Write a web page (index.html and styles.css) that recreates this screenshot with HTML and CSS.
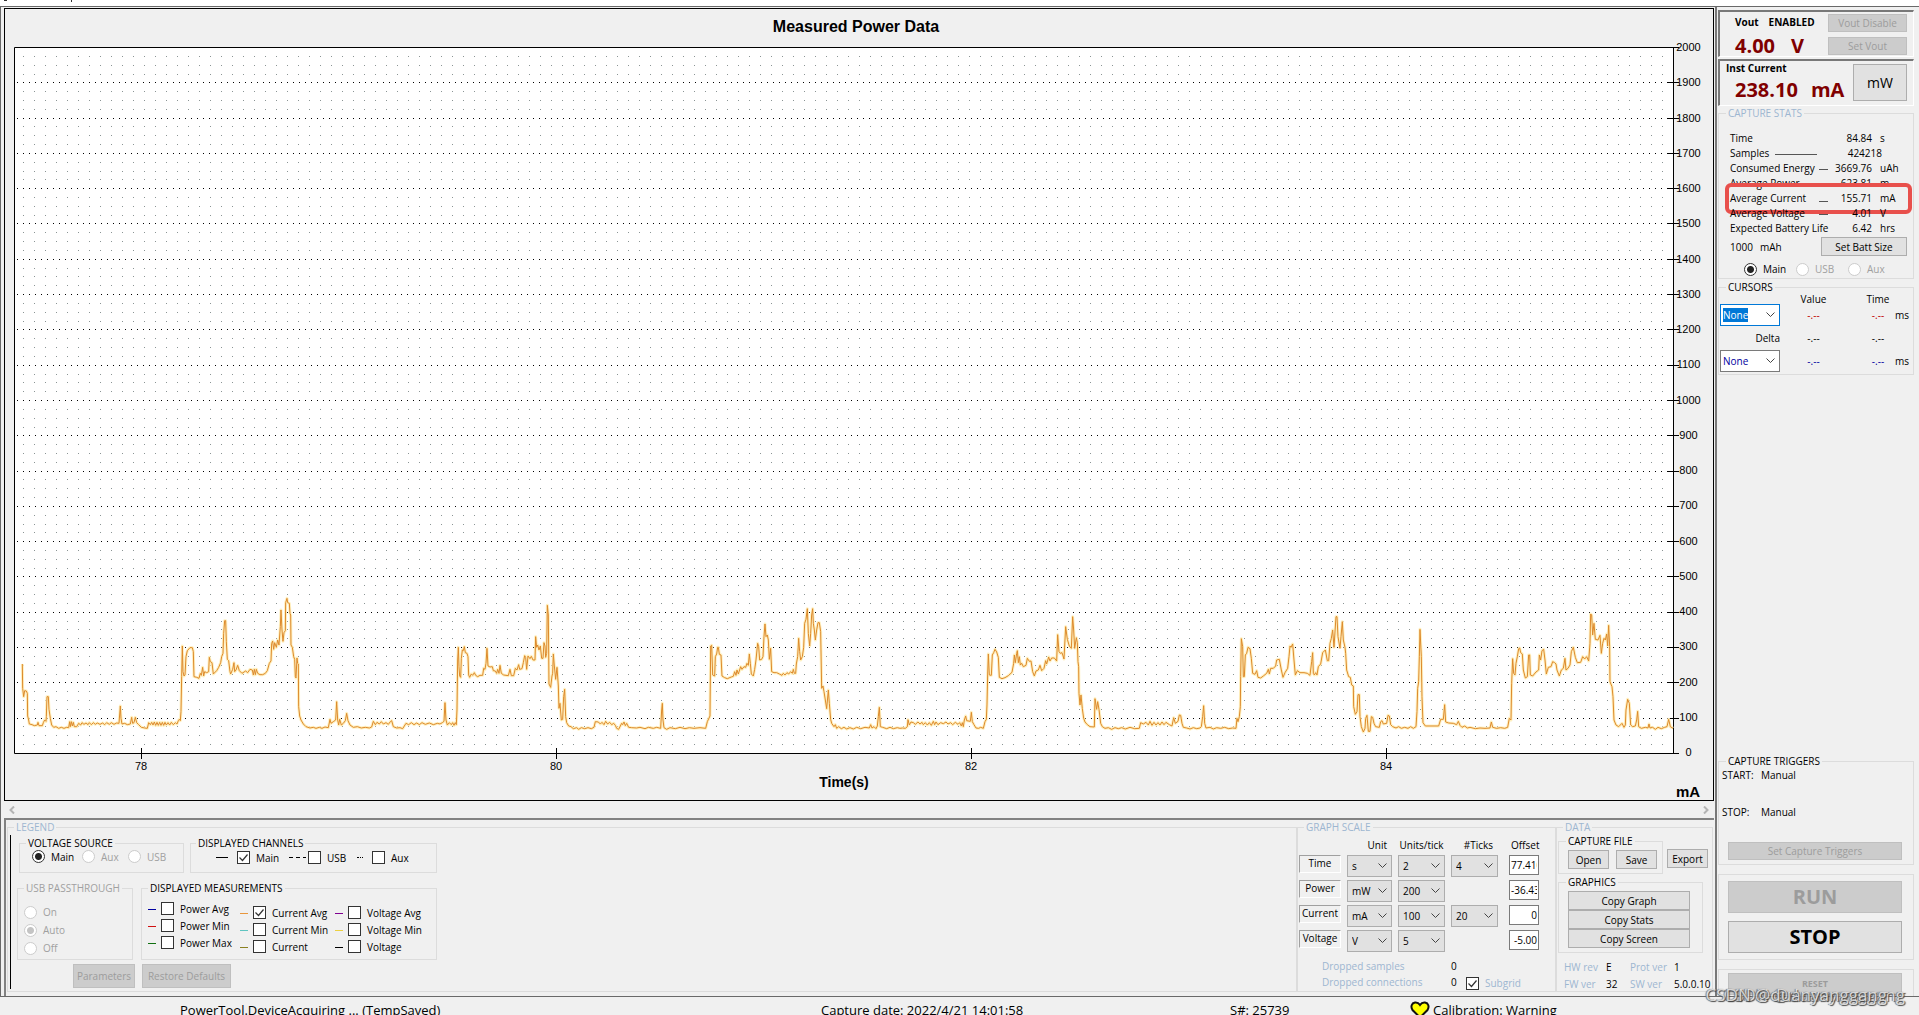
FILE: index.html
```html
<!DOCTYPE html>
<html lang="en">
<head>
<meta charset="utf-8">
<title>PowerTool</title>
<link rel="stylesheet" href="styles.css">
</head>
<body>
<header class="menu-strip"><i></i><i></i></header>

<main class="window">
  <div class="work">
    <figure class="chart">
      <figcaption>Measured Power Data</figcaption>
      <svg class="plot" viewBox="14 47 1660 707" preserveAspectRatio="none" aria-label="Current over time">
        <defs>
          <g id="trace">
            <path transform="translate(0 560) scale(.33333)" d="M67 312L68 385 71 410 74 392 79 393 82 400 83 468 86 480 88 492 96 494 103 497 112 495 114 487 117 497 127 497 130 488 134 480 138 484 139 470 141 410 145 410 147 448 151 475 155 495 161 502 168 500 176 505 184 502 192 505 200 502 206 503 209 485 211 500 214 485 217 498 220 487 223 500 230 500 236 490 242 495 246 488 252 493 258 489 264 494 268 488 274 494 280 488 286 493 292 489 300 493 308 489 314 494 320 488 328 493 334 488 342 493 350 489 357 490 361 438 363 475 366 492 374 490 382 494 391 492 395 472 398 490 402 488 406 472 410 488 416 494 424 502 434 504 442 505 446 488 451 494 455 487 459 495 463 486 467 496 471 487 475 496 479 487 483 496 487 487 491 496 495 487 499 495 504 488 509 495 514 487 520 494 526 488 531 492 535 482 538 478 541 482 543 455 545 350 547 258 549 335 552 348 555 345 558 290 562 272 570 263 577 263 580 275 582 350 590 352 597 355 601 340 604 346 608 322 611 348 614 335 620 338 626 335 628 292 631 305 636 308 640 342 650 332 656 322 662 308 665 290 669 280 671 220 674 182 677 182 679 245 682 298 686 302 690 335 692 342 698 328 702 308 704 335 708 330 713 316 718 332 726 340 737 333 743 338 750 328 757 330 760 345 763 328 766 344 769 328 773 340 780 344 788 344 796 340 802 332 808 310 813 303 815 250 818 243 821 268 824 248 829 262 833 240 837 255 841 200 843 150 846 210 849 244 852 218 856 212 857 128 861 115 863 128 868 130 870 160 872 165 873 255 877 262 881 290 884 298 886 350 888 354 891 294 893 310 895 312 896 440 899 468 903 480 910 492 918 500 930 504 940 502 948 505 958 502 966 505 975 501 985 503 990 478 993 490 1000 485 1007 480 1010 425 1013 480 1016 495 1019 478 1024 495 1030 490 1036 482 1040 460 1044 482 1050 495 1060 502 1072 500 1084 504 1096 502 1108 504 1115 501 1120 484 1126 494 1131 487 1138 492 1144 485 1150 492 1158 488 1165 493 1172 484 1175 482 1180 500 1190 504 1200 503 1208 506 1218 490 1226 494 1234 488 1242 494 1250 489 1258 494 1266 488 1276 493 1288 489 1300 494 1312 490 1320 492"/>
            <path transform="translate(440 560) scale(.33333)" d="M0 492L7 488 12 484 15 428 18 480 22 495 28 488 34 494 38 488 42 496 46 488 49 494 51 450 53 300 55 262 57 320 59 348 62 352 64 295 67 270 70 272 73 260 76 278 81 280 84 290 86 345 89 352 94 342 98 346 103 338 107 346 113 350 120 346 128 346 131 325 135 328 138 310 141 265 144 318 150 321 157 320 160 332 166 333 170 340 173 328 177 340 180 316 184 340 191 345 205 347 210 328 214 347 221 347 226 325 231 330 236 314 239 328 246 326 250 308 254 287 257 292 260 328 264 288 270 296 274 289 279 300 285 300 287 230 290 262 293 255 297 270 301 258 305 295 309 295 312 248 315 258 317 292 320 280 322 136 325 165 327 372 332 382 336 348 338 340 340 282 343 318 347 358 351 322 355 378 357 445 360 430 364 480 368 478 371 410 374 388 377 470 380 488 386 498 393 500 400 506 410 503 416 508 424 503 434 506 444 503 454 506 462 502 466 485 475 486 481 492 486 487 492 494 497 484 503 492 509 487 515 494 521 490 526 496 530 505 536 508 541 498 545 490 548 494 552 486 556 497 560 490 566 502 575 503 590 504 600 502 615 506 625 502 640 505 650 502 662 505 665 450 667 430 669 480 672 503 680 508 690 503 706 506 720 502 735 506 748 503 762 505 780 503 797 505 802 485 810 468 812 258 815 256 818 345 824 348 826 290 830 282 833 262 835 262 838 283 843 285 846 348 854 353 862 356 874 351 880 349 884 335 888 346 891 330 895 342 902 320 906 328 912 320 917 322 921 310 925 316 928 282 931 310 934 342 940 348 944 328 948 300 953 250 956 260 959 300 965 298 969 290 972 230 975 192 978 230 982 225 985 240 988 298 992 265 995 335 1002 338 1010 338 1018 342 1026 346 1030 340 1035 345 1041 338 1046 342 1052 335 1057 340 1060 328 1063 340 1067 340 1069 312 1073 290 1076 235 1079 275 1082 300 1087 290 1091 262 1094 190 1098 178 1102 146 1105 220 1109 258 1112 220 1115 165 1118 146 1120 190 1123 210 1126 240 1130 210 1134 188 1138 188 1142 215 1145 385 1149 378 1152 395 1156 420 1160 446 1165 390 1168 430 1172 478 1175 490 1182 500 1186 494 1190 505 1196 500 1204 506 1212 502 1220 507 1230 503 1240 507 1250 502 1262 506 1275 502 1288 504 1292 494 1296 504 1302 500 1308 506 1312 498 1315 470 1318 442 1321 500 1328 502 1340 506 1350 502 1360 506 1372 503 1380 505"/>
            <path transform="translate(900 560) scale(.33333)" d="M0 505L8 504 16 505 22 500 24 479 28 495 33 486 40 488 46 493 54 486 60 492 66 487 70 494 76 488 82 495 88 488 94 496 100 484 104 494 108 486 114 494 122 488 130 491 138 486 144 492 152 488 158 494 166 487 174 493 179 488 184 498 187 488 190 500 193 480 197 468 200 482 211 484 214 457 217 485 222 494 228 504 236 505 242 502 250 505 255 485 259 478 261 435 263 345 265 282 268 345 274 346 277 285 281 278 285 268 290 276 295 292 298 352 306 356 315 353 325 347 336 337 341 310 343 285 346 308 350 280 352 272 355 308 358 290 361 315 365 310 370 320 378 316 382 295 388 304 393 303 398 335 403 348 408 333 415 330 420 316 425 332 432 325 437 302 440 312 446 291 450 303 455 294 463 294 470 303 473 224 477 275 481 280 486 278 492 297 497 200 502 238 508 258 514 265 518 170 521 210 524 265 529 233 532 248 534 305 536 320 537 400 540 435 543 405 547 446 551 475 555 486 562 494 570 500 583 501 585 416 590 448 593 425 597 448 602 490 607 500 615 505 625 503 635 508 645 503 655 506 665 503 676 507 690 502 704 506 718 505 722 488 730 492 738 487 745 495 750 484 756 496 762 487 768 495 774 488 780 495 786 486 792 494 798 487 808 494 816 498 821 473 826 490 834 484 838 465 842 466 846 490 850 502 860 504 870 507 880 503 890 506 900 504 904 500 908 470 911 437 914 490 918 504 930 502 940 507 950 503 962 505 974 502 986 506 998 504 1008 505 1011 475 1014 485 1018 470 1021 440 1022 350 1024 236 1028 260 1030 350 1033 350 1036 285 1040 280 1044 262 1050 266 1054 295 1058 340 1065 343 1070 332 1074 352 1082 354 1090 348 1100 340 1105 328 1108 342 1112 325 1120 325 1127 318 1130 300 1138 298 1144 330 1149 352 1155 338 1163 325 1167 290 1170 258 1173 262 1178 252 1182 300 1186 345 1192 332 1200 338 1212 338 1222 340 1230 346 1235 305 1238 278 1240 340 1243 345 1247 338 1251 345 1255 320 1262 312 1268 278 1276 270 1282 302 1286 302 1290 250 1294 235 1298 210 1302 262 1308 170 1311 170 1314 230 1320 265"/>
            <path transform="translate(1230 560) scale(.33333)" d="M330 265L333 230 337 185 340 240 345 262 347 280 350 330 356 350 361 352 365 375 370 378 371 440 376 463 381 455 384 404 388 404 390 470 394 500 400 516 405 505 407 475 411 466 415 514 420 514 424 470 428 472 432 490 437 500 448 502 452 485 456 482 460 492 470 490 474 466 478 468 482 494 488 500 498 504 506 500 514 505 524 502 534 505 542 500 550 505 558 500 561 455 563 385 566 365 568 290 570 208 574 290 576 410 579 488 586 498 600 498 626 498 632 478 640 478 644 434 647 486 656 489 670 490 680 494 685 484 690 496 696 502 704 498 712 504 720 502 736 506 750 504 765 505 780 504 784 486 788 502 800 505 812 503 824 505 833 502 838 475 843 480 845 370 848 296 851 340 855 345 858 310 862 290 866 266 869 264 872 278 877 282 880 330 886 354 892 350 896 285 899 285 901 345 908 348 918 336 926 330 928 285 932 300 936 272 941 268 945 300 949 342 955 322 963 320 968 305 974 308 978 312 981 330 988 348 994 330 1000 325 1005 295 1008 330 1014 325 1020 315 1024 275 1030 262 1036 292 1042 308 1052 307 1058 290 1064 297 1070 290 1076 303 1080 250 1082 162 1085 165 1088 225 1092 190 1096 238 1104 240 1110 226 1114 280 1118 250 1122 235 1126 240 1130 222 1133 258 1136 196 1139 260 1140 365 1146 380 1149 410 1152 480 1158 495 1166 500 1176 490 1182 502 1186 495 1188 450 1193 418 1198 430 1202 495 1208 500 1216 498 1220 480 1223 454 1226 500 1234 505 1246 502 1254 504 1257 492 1260 504 1268 502 1276 508 1284 502 1294 506 1304 502 1311 500 1316 478 1321 500 1329 505"/>
          </g>
        </defs>
        <rect class="plot-area" x="14.5" y="47.5" width="1659" height="706"/>
        <path class="grid-minor" d="M23 56.5H1672M23 65.5H1672M23 74.5H1672M23 91.5H1672M23 100.5H1672M23 109.5H1672M23 126.5H1672M23 135.5H1672M23 144.5H1672M23 162.5H1672M23 171.5H1672M23 179.5H1672M23 197.5H1672M23 206.5H1672M23 215.5H1672M23 232.5H1672M23 241.5H1672M23 250.5H1672M23 268.5H1672M23 276.5H1672M23 285.5H1672M23 303.5H1672M23 312.5H1672M23 321.5H1672M23 338.5H1672M23 347.5H1672M23 356.5H1672M23 374.5H1672M23 382.5H1672M23 391.5H1672M23 409.5H1672M23 418.5H1672M23 427.5H1672M23 444.5H1672M23 453.5H1672M23 462.5H1672M23 479.5H1672M23 488.5H1672M23 497.5H1672M23 515.5H1672M23 524.5H1672M23 532.5H1672M23 550.5H1672M23 559.5H1672M23 568.5H1672M23 585.5H1672M23 594.5H1672M23 603.5H1672M23 621.5H1672M23 629.5H1672M23 638.5H1672M23 656.5H1672M23 665.5H1672M23 674.5H1672M23 691.5H1672M23 700.5H1672M23 709.5H1672M23 726.5H1672M23 735.5H1672M23 744.5H1672"/>
        <path class="grid-major" d="M17 82.5H1672M17 118.5H1672M17 153.5H1672M17 188.5H1672M17 223.5H1672M17 259.5H1672M17 294.5H1672M17 329.5H1672M17 365.5H1672M17 400.5H1672M17 435.5H1672M17 471.5H1672M17 506.5H1672M17 541.5H1672M17 576.5H1672M17 612.5H1672M17 647.5H1672M17 682.5H1672M17 718.5H1672"/>
        <path class="ticks" d="M1667 47.5H1679M1667 82.5H1679M1667 118.5H1679M1667 153.5H1679M1667 188.5H1679M1667 223.5H1679M1667 259.5H1679M1667 294.5H1679M1667 329.5H1679M1667 365.5H1679M1667 400.5H1679M1667 435.5H1679M1667 471.5H1679M1667 506.5H1679M1667 541.5H1679M1667 576.5H1679M1667 612.5H1679M1667 647.5H1679M1667 682.5H1679M1667 718.5H1679M1667 753.5H1679M141.5 748V759M556.5 748V759M971.5 748V759M1386.5 748V759"/>
        <use href="#trace" class="halo"/>
        <use href="#trace" class="line"/>
      </svg>
      <ol class="y-axis">
        <li>2000</li><li>1900</li><li>1800</li><li>1700</li><li>1600</li><li>1500</li><li>1400</li><li>1300</li><li>1200</li><li>1100</li><li>1000</li><li>900</li><li>800</li><li>700</li><li>600</li><li>500</li><li>400</li><li>300</li><li>200</li><li>100</li><li>0</li>
      </ol>
      <div class="x-axis">
        <ol><li>78</li><li>80</li><li>82</li><li>84</li></ol>
        <p>Time(s)</p>
      </div>
      <p class="y-unit">mA</p>
    </figure>

    <div class="scroll">
      <svg width="6" height="8" viewBox="0 0 6 8"><path d="M5 .5L1.500 4 5 7.500"/></svg>
      <svg width="6" height="8" viewBox="0 0 6 8"><path d="M1 .5L4.500 4 1 7.500"/></svg>
    </div>

    <div class="dock">
      <fieldset class="legend-panel">
        <legend class="blue">LEGEND</legend>
        <div class="legend-body">
          <div class="pair sources">
            <fieldset class="source">
              <legend>VOLTAGE SOURCE</legend>
              <label><input type="radio" name="src" checked>Main</label>
              <label class="off"><input type="radio" name="src" disabled>Aux</label>
              <label class="off"><input type="radio" name="src" disabled>USB</label>
            </fieldset>
            <fieldset class="channels">
              <legend>DISPLAYED CHANNELS</legend>
              <label><b class="dash solid"></b><input type="checkbox" checked>Main</label>
              <label><b class="dash dashed"></b><input type="checkbox">USB</label>
              <label><b class="dash dotted"></b><input type="checkbox">Aux</label>
            </fieldset>
          </div>
          <div class="pair measures">
            <fieldset class="usb">
              <legend class="off">USB PASSTHROUGH</legend>
              <label class="off"><input type="radio" name="usb" disabled>On</label>
              <label class="off"><input type="radio" name="usb" checked disabled>Auto</label>
              <label class="off"><input type="radio" name="usb" disabled>Off</label>
            </fieldset>
            <fieldset class="shown">
              <legend>DISPLAYED MEASUREMENTS</legend>
              <div>
                <label><b class="swatch navy"></b><input type="checkbox">Power Avg</label>
                <label><b class="swatch red"></b><input type="checkbox">Power Min</label>
                <label><b class="swatch green"></b><input type="checkbox">Power Max</label>
              </div>
              <div class="lower">
                <label><b class="swatch orange"></b><input type="checkbox" checked>Current Avg</label>
                <label><b class="swatch teal"></b><input type="checkbox">Current Min</label>
                <label><b class="swatch olive"></b><input type="checkbox">Current</label>
              </div>
              <div class="lower">
                <label><b class="swatch purple"></b><input type="checkbox">Voltage Avg</label>
                <label><b class="swatch yellow"></b><input type="checkbox">Voltage Min</label>
                <label><b class="swatch black"></b><input type="checkbox">Voltage</label>
              </div>
            </fieldset>
          </div>
          <div class="legend-actions">
            <button type="button" disabled>Parameters</button>
            <button type="button" disabled>Restore Defaults</button>
          </div>
        </div>
      </fieldset>

      <fieldset class="scale-panel">
        <legend class="blue">GRAPH SCALE</legend>
        <div class="scale-grid">
          <span></span><span class="end">Unit</span><span class="mid">Units/tick</span><span class="end">#Ticks</span><span class="mid offset">Offset</span>
          <span class="sunken">Time</span><select aria-label="Time unit"><option>s</option></select><select aria-label="Time units per tick"><option>2</option></select><select aria-label="Time ticks"><option>4</option></select><input class="offset" aria-label="Time offset" value="77.410">
          <span class="sunken">Power</span><select aria-label="Power unit"><option>mW</option></select><select aria-label="Power units per tick"><option>200</option></select><span></span><input class="offset" aria-label="Power offset" value="-36.43">
          <span class="sunken">Current</span><select aria-label="Current unit"><option>mA</option></select><select aria-label="Current units per tick"><option>100</option></select><select aria-label="Current ticks"><option>20</option></select><input class="offset num" aria-label="Current offset" value="0">
          <span class="sunken">Voltage</span><select aria-label="Voltage unit"><option>V</option></select><select aria-label="Voltage units per tick"><option>5</option></select><span></span><input class="offset num" aria-label="Voltage offset" value="-5.00">
        </div>
        <div class="dropped">
          <span class="blue">Dropped samples</span><span>0</span><span></span>
          <span class="blue">Dropped connections</span><span>0</span><label class="blue"><input type="checkbox" checked>Subgrid</label>
        </div>
      </fieldset>

      <fieldset class="data-panel">
        <legend class="blue">DATA</legend>
        <div class="files">
          <fieldset>
            <legend>CAPTURE FILE</legend>
            <button type="button">Open</button><button type="button">Save</button>
          </fieldset>
          <button type="button">Export</button>
        </div>
        <fieldset class="graphics">
          <legend>GRAPHICS</legend>
          <button type="button">Copy Graph</button>
          <button type="button">Copy Stats</button>
          <button type="button">Copy Screen</button>
        </fieldset>
        <dl class="versions">
          <dt>HW rev</dt><dd>E</dd><dt>Prot ver</dt><dd>1</dd>
          <dt>FW ver</dt><dd>32</dd><dt>SW ver</dt><dd>5.0.0.10</dd>
        </dl>
      </fieldset>
    </div>
  </div>

  <aside class="side">
    <section class="readout vout">
      <div class="label"><span>Vout</span><span>ENABLED</span></div>
      <button type="button" disabled>Vout Disable</button>
      <div class="value"><span>4.00</span><span>V</span></div>
      <button type="button" disabled>Set Vout</button>
    </section>
    <section class="readout inst">
      <div class="label">Inst Current</div>
      <div class="value"><span>238.10</span><span>mA</span></div>
      <button type="button">mW</button>
    </section>

    <fieldset class="stats">
      <legend class="blue">CAPTURE STATS</legend>
      <table>
        <tr><th>Time</th><td>84.84</td><td>s</td></tr>
        <tr><th>Samples <i class="lead long"></i></th><td class="wide" colspan="2">424218</td></tr>
        <tr><th>Consumed Energy <i class="lead"></i></th><td>3669.76</td><td>uAh</td></tr>
        <tr><th>Average Power</th><td>623.81</td><td>m</td></tr>
        <tr class="marked"><th>Average Current <i class="lead low"></i></th><td>155.71</td><td>mA</td></tr>
        <tr><th>Average Voltage <i class="lead"></i></th><td>4.01</td><td>V</td></tr>
        <tr><th>Expected Battery Life</th><td>6.42</td><td>hrs</td></tr>
      </table>
      <div class="battery"><span>1000</span><span>mAh</span><button type="button">Set Batt Size</button></div>
      <div class="inputs">
        <label><input type="radio" name="in" checked>Main</label>
        <label class="off"><input type="radio" name="in" disabled>USB</label>
        <label class="off"><input type="radio" name="in" disabled>Aux</label>
      </div>
    </fieldset>

    <fieldset class="cursors">
      <legend>CURSORS</legend>
      <div class="cursor-grid">
        <span></span><span>Value</span><span>Time</span><span></span>
        <select class="focused" aria-label="Cursor 1"><option>None</option></select><span class="c-red">-.--</span><span class="c-red">-.--</span><span>ms</span>
        <span class="end">Delta</span><span>-.--</span><span>-.--</span><span></span>
        <select class="plain" aria-label="Cursor 2"><option>None</option></select><span class="c-blue">-.--</span><span class="c-blue">-.--</span><span>ms</span>
      </div>
    </fieldset>

    <fieldset class="triggers">
      <legend>CAPTURE TRIGGERS</legend>
      <dl><dt>START:</dt><dd>Manual</dd><dt>STOP:</dt><dd>Manual</dd></dl>
      <button type="button" disabled>Set Capture Triggers</button>
    </fieldset>
    <div class="box run">
      <button type="button" disabled>RUN</button>
      <button type="button">STOP</button>
    </div>
    <div class="box reset"><button type="button" disabled>RESET</button></div>
  </aside>
</main>

<footer class="status">
  <span>PowerTool.DeviceAcquiring ... (TempSaved)</span>
  <span>Capture date: 2022/4/21 14:01:58</span>
  <span>S#: 25739</span>
  <span class="calibration"><svg width="20" height="18" viewBox="0 0 20 18"><path d="M10 16.500L2.500 9C.5 6 1.500 2 5 1.500 7.500 1.200 9 2.500 10 4 11 2.500 12.500 1.200 15 1.500 18.500 2 19.500 6 17.500 9Z"/></svg>Calibration: Warning</span>
</footer>
<div class="watermark"><span>CSDN @duanyanggang</span><span>CSDN @duanyanggang</span></div>
</body>
</html>
```

FILE: styles.css
```css
* { box-sizing: border-box; }

body {
  margin: 0;
  height: 100vh;
  display: flex;
  flex-direction: column;
  position: relative;
  overflow: hidden;
  background: #f0f0f0;
  color: #000;
  font: 10px/14px "Open Sans", "Noto Sans", sans-serif;
}

p, ol, dl, dd, figure { margin: 0; padding: 0; }
ol { list-style: none; }
button, input, select { font: inherit; color: inherit; margin: 0; }

.menu-strip { height: 6px; flex: none; background: #fff; padding-left: 4px; display: flex; gap: 64px; }
.menu-strip i { width: 3px; height: 1px; background: #333; }
.menu-strip i + i { width: 1px; height: 2px; }

.window {
  flex: 1;
  min-height: 0;
  display: grid;
  grid-template-columns: 1fr 204px;
  border-top: 1px solid #696969;
  border-left: 1px solid #696969;
  border-bottom: 1px solid #696969;
}
.work { display: flex; flex-direction: column; min-width: 0; min-height: 0; padding: 1px 1px 0 3px; }

/* chart */
.chart {
  flex: 1;
  min-height: 0;
  display: grid;
  grid-template: 38px minmax(0, 1fr) 46px / 9px minmax(0, 1fr) 39px;
  border: 1px solid #000;
  font: 11px/14px "Liberation Sans", Arial, sans-serif;
}
.chart figcaption { grid-column: 1 / -1; padding-right: 6px; text-align: center; font: bold 16px/35px "Liberation Sans", Arial, sans-serif; }
.plot { grid-column: 2; grid-row: 2; width: 100%; height: 100%; overflow: visible; display: block; }
.plot path, .plot rect { vector-effect: non-scaling-stroke; fill: none; }
.plot .plot-area { fill: #fff; stroke: #000; }
.grid-minor { stroke: #8a9494; stroke-dasharray: 1 10; shape-rendering: crispEdges; }
.grid-major { stroke: #000; stroke-dasharray: 1 5; shape-rendering: crispEdges; }
.ticks { stroke: #000; }
.halo { stroke: #fff0c0; stroke-width: 3px; stroke-linejoin: round; }
.line { stroke: #dd8a2c; stroke-width: 1px; }
.y-axis { grid-column: 3; grid-row: 2; display: flex; flex-direction: column; justify-content: space-between; padding: 0 10px 2px 0; }
.y-axis li { height: 0; display: flex; align-items: center; justify-content: center; }
.x-axis { grid-column: 2; grid-row: 3; text-align: center; }
.x-axis ol { display: grid; grid-template-columns: repeat(4, 25%); width: 100%; margin-left: -4.85%; padding-top: 5px; }
.x-axis p { font: bold 14px/18px "Liberation Sans", Arial, sans-serif; }
.y-unit { grid-column: 3; grid-row: 3; align-self: end; padding-left: 2px; font: bold 15px/17px "Liberation Sans", Arial, sans-serif; }

.scroll { flex: none; height: 17px; display: flex; align-items: center; justify-content: space-between; padding: 0 5px; }
.scroll svg { fill: none; stroke: #b4b4b4; stroke-width: 2px; }

/* shared controls */
fieldset { margin: 0; padding: 0; min-width: 0; border: 1px solid #dcdcdc; }
legend { margin-left: 7px; padding: 0 2px; line-height: 14px; }
label { display: inline-flex; align-items: center; }
.blue, .versions dt { color: #9db6d0; }
.off { color: #a0a0a0; }
.end { text-align: right; }
.mid { text-align: center; }

button {
  padding: 0;
  height: 19px;
  border: 1px solid #adadad;
  border-radius: 0;
  background: #e1e1e1;
  white-space: nowrap;
}
button:disabled { background: #ccc; border-color: #bfbfbf; color: #9c9c9c; }

input[type="radio"], input[type="checkbox"] { appearance: none; flex: none; width: 13px; height: 13px; border: 1px solid #333; background: #fff; }
input[type="radio"] { border-radius: 50%; }
input[type="radio"]:checked { background: radial-gradient(circle, #222 0 3px, #fff 4px); }
input[type="radio"]:disabled { border-color: #ccc; }
input[type="radio"]:checked:disabled { background: radial-gradient(circle, #c4c4c4 0 3px, #fff 4px); }
input[type="checkbox"]:checked {
  background: #fff url("data:image/svg+xml,%3Csvg xmlns='http://www.w3.org/2000/svg' viewBox='0 0 11 11'%3E%3Cpath d='M1.500 5.500l3 3L9.500 2.500' fill='none' stroke='%23333' stroke-width='1.200'/%3E%3C/svg%3E");
}

select {
  appearance: none;
  height: 22px;
  width: 100%;
  padding: 0 0 0 4px;
  border: 1px solid #adadad;
  border-radius: 0;
  background: #e1e1e1 url("data:image/svg+xml,%3Csvg xmlns='http://www.w3.org/2000/svg' width='9' height='6'%3E%3Cpath d='M.5.5l4 4 4-4' fill='none' stroke='%23444'/%3E%3C/svg%3E") no-repeat right 4px center;
}

/* lower dock */
.dock {
  flex: none;
  display: grid;
  grid-template-columns: minmax(0, 1fr) 259px 157px;
  padding: 0 1px 4px 1px;
  border-top: 2px solid #828282;
  border-left: 2px solid #828282;
}
.dock > fieldset > legend { margin-left: 6px; }
.legend-body { border-left: 1px solid #000; margin: 1px 0 1px 2px; padding: 1px 0 1px 6px; }
.pair { display: flex; width: 420px; }
.sources { gap: 6px; padding-left: 2px; }
.source, .channels { height: 37px; display: flex; }
.source { width: 165px; padding-left: 12px; }
.source legend { margin-left: -6px; }
.channels legend { margin-left: -20px; }
.source label { height: 13px; }
.channels label { height: 15px; }
.source input { margin-right: 6px; }
.source label { width: 50px; }
.source label + label { width: 46px; }
.channels { width: 247px; padding-left: 25px; }
.channels input { margin-right: 6px; }
.channels label { width: 73px; }
.channels label + label { width: 68px; }
.dash { margin-right: 9px; width: 12px; border-top: 1px solid #000; }
.dash.dashed { width: 17px; margin-right: 2px; border: 0; height: 1px; background: repeating-linear-gradient(90deg, #000 0 4px, transparent 4px 7px); }
.dash.dotted { width: 6px; border-top-style: dotted; }
.measures { gap: 8px; padding-top: 8px; }
.usb { width: 116px; height: 79px; display: flex; flex-direction: column; padding: 8px 0 0 6px; }
.usb legend { margin-left: 0; }
.usb label { height: 18px; }
.usb input { margin-right: 6px; }
.shown { width: 296px; height: 79px; display: flex; padding: 5px 0 0 6px; }
.shown legend { margin-left: 0; }
.shown div { width: 92px; display: flex; flex-direction: column; }
.shown div.lower { width: 95px; padding-top: 4px; }
.shown label { height: 17px; white-space: nowrap; }
.shown input { margin-right: 6px; }
.swatch { width: 8px; height: 1px; margin: 2px 5px 0 0; background: #000; }
.navy { background: #0000a0; }
.red { background: #d01010; }
.green { background: #107010; }
.orange { background: #e8963c; }
.teal { background: #5fc4c0; }
.olive { background: #8a8020; }
.purple { background: #800090; }
.yellow { background: #ecd040; }
.legend-actions { display: flex; gap: 7px; padding: 4px 0 0 56px; }
.legend-actions button { width: 62px; height: 24px; }
.legend-actions button + button { width: 89px; }

.scale-grid {
  display: grid;
  grid-template: 17px 25px 25px 25px 25px / 42px 45px 47px 47px 29px;
  column-gap: 6px;
  padding: 4px 0 0 1px;
}
.scale-grid .end { padding-right: 5px; }
.scale-grid .offset { margin-left: 5px; }
.scale-grid span.offset { white-space: nowrap; margin: 0; padding-left: 7px; }
.scale-grid .mid { white-space: nowrap; }
.sunken { height: 18px; border: 1px solid #a0a0a0; border-right-color: #fff; border-bottom-color: #fff; text-align: center; }
input.offset { width: 30px; height: 20px; padding: 0 1px; border: 1px solid #7a7a7a; background: #fff; }
input.num { text-align: right; }
.dropped { display: grid; grid-template: 16px 16px / 129px 15px 90px; padding: 4px 0 0 24px; }
.dropped input { margin-right: 6px; }

.files { display: flex; gap: 4px; padding-left: 1px; }
.files fieldset { width: 105px; height: 40px; padding: 2px 0 0 9px; display: flex; gap: 7px; }
.files legend { margin-left: -2px; }
.files button { width: 41px; }
.files > button { margin-top: 15px; }
.graphics { width: 145px; height: 78px; margin: 1px 0 0 1px; padding: 2px 12px 0 9px; }
.graphics legend { margin-left: -2px; }
.graphics button { display: block; width: 100%; height: 19px; line-height: 14px; }
.versions { display: grid; grid-template: 17px 14px / 42px 24px 44px 36px; padding: 7px 0 0 7px; }

/* right column */
.side {
  display: flex;
  flex-direction: column;
  padding: 3px 5px 0 1px;
  border-left: 2px solid #787878;
  min-height: 0;
}
.readout { border: 2px solid #787878; border-right: 1px solid #fff; border-bottom: 1px solid #fff; display: grid; font-weight: bold; }
.readout button { font-weight: normal; }
.readout .label { font-size: 10px; display: flex; gap: 10px; }
.readout .value { color: #800000; font-size: 20px; line-height: 24px; display: flex; white-space: nowrap; }
.vout { height: 47px; grid-template: 23px 21px / 108px 79px; }
.vout .label { padding: 3px 0 0 15px; }
.vout .value { padding-left: 15px; gap: 16px; line-height: 22px; }
.vout button { height: 18px; margin-top: 2px; }
.inst { height: 47px; margin-top: 2px; grid-template: 17px 27px / 133px 54px; }
.inst .label { padding: 0 0 0 6px; }
.inst .value { grid-row: 2; padding-left: 15px; gap: 13px; }
.inst button { grid-area: 1 / 2 / 3 / 3; height: 37px; margin-top: 3px; font-size: 14px; }

.stats { margin-top: 0; }
.stats table { border-collapse: collapse; width: 184px; margin: 11px 0 0 11px; table-layout: fixed; }
.stats tr { height: 15px; position: relative; }
.stats th, .stats td { padding: 0; font-weight: normal; line-height: 15px; white-space: nowrap; }
.stats th { width: 103px; text-align: left; }
.stats td { width: 39px; text-align: right; }
.stats td + td { width: 42px; text-align: left; padding-left: 8px; }
.stats td.wide { padding-right: 32px; }
.lead { float: right; width: 9px; margin: 8px 5px 0 0; border-top: 1px solid #555; }
.lead.long { width: 42px; margin-right: 16px; }
.lead.low { margin-top: 10px; }
.marked::after { content: ""; position: absolute; inset: -8px 2px -8px -5px; border: 4px solid #e8504c; border-radius: 6px; }
.battery { display: flex; align-items: center; padding: 1px 0 0 11px; }
.battery span { width: 30px; }
.battery button { margin-left: 31px; width: 86px; }
.inputs { display: flex; padding: 6px 0 2px 25px; }
.inputs label { width: 52px; }
.inputs input { margin-right: 6px; }

.cursors { margin-top: 1px; }
.cursor-grid { display: grid; grid-template: 9px 24px 22px 24px / 60px 66px 46px 20px; align-items: center; padding: 0 0 1px 1px; }
.cursor-grid span { text-align: center; }
.cursor-grid span:nth-child(4n + 2) { padding-left: 1px; }
.cursor-grid span:nth-child(4n + 3) { padding-left: 18px; }
.cursor-grid span.end { text-align: right; }
.cursor-grid select { background-color: #fff; border-color: #7a7a7a; padding-left: 2px; }
.cursor-grid .focused {
  border-color: #0078d7;
  color: #fff;
  background-image: url("data:image/svg+xml,%3Csvg xmlns='http://www.w3.org/2000/svg' width='9' height='6'%3E%3Cpath d='M.5.5l4 4 4-4' fill='none' stroke='%23444'/%3E%3C/svg%3E"), linear-gradient(#0078d7, #0078d7);
  background-repeat: no-repeat;
  background-position: right 4px center, 2px 3px;
  background-size: 9px 6px, 25px 14px;
}
.cursor-grid .plain, .c-blue { color: #0000a0; }
.c-red { color: #c00000; }

.triggers { margin-top: auto; padding: 0 11px 4px 3px; }
.triggers legend { margin-left: 4px; }
.triggers dl { display: grid; grid-template: 37px 37px / 39px 1fr; }
.triggers button { display: block; width: 174px; height: 18px; margin-left: 6px; }
.box { flex: none; border: 1px solid #dcdcdc; padding: 6px 11px 6px 9px; display: grid; gap: 8px; margin-top: 9px; }
.run button { height: 32px; font-size: 20px; line-height: 26px; font-weight: bold; }
.reset { height: 27px; padding: 3px 11px 0 9px; border-bottom: 0; }
.reset button { height: 22px; font-size: 9px; font-weight: bold; }

/* status line runs off the bottom edge */
.status {
  flex: none;
  height: 18px;
  padding: 4px 0 0 180px;
  display: grid;
  grid-template-columns: 641px 409px 180px 1fr;
  font-size: 13px;
  line-height: 18px;
  overflow: hidden;
  white-space: nowrap;
}
.calibration { display: flex; gap: 3px; }
.calibration svg { flex: none; fill: #ff0; stroke: #111; stroke-width: 2px; }

.watermark { position: absolute; right: 14px; bottom: 9px; font-size: 17px; line-height: 22px; color: rgba(240, 240, 240, .8); text-shadow: 1px 1px 1px #444, -1px 0 1px #777; white-space: nowrap; }
.watermark span + span { position: absolute; right: 18px; top: 0; }
```
